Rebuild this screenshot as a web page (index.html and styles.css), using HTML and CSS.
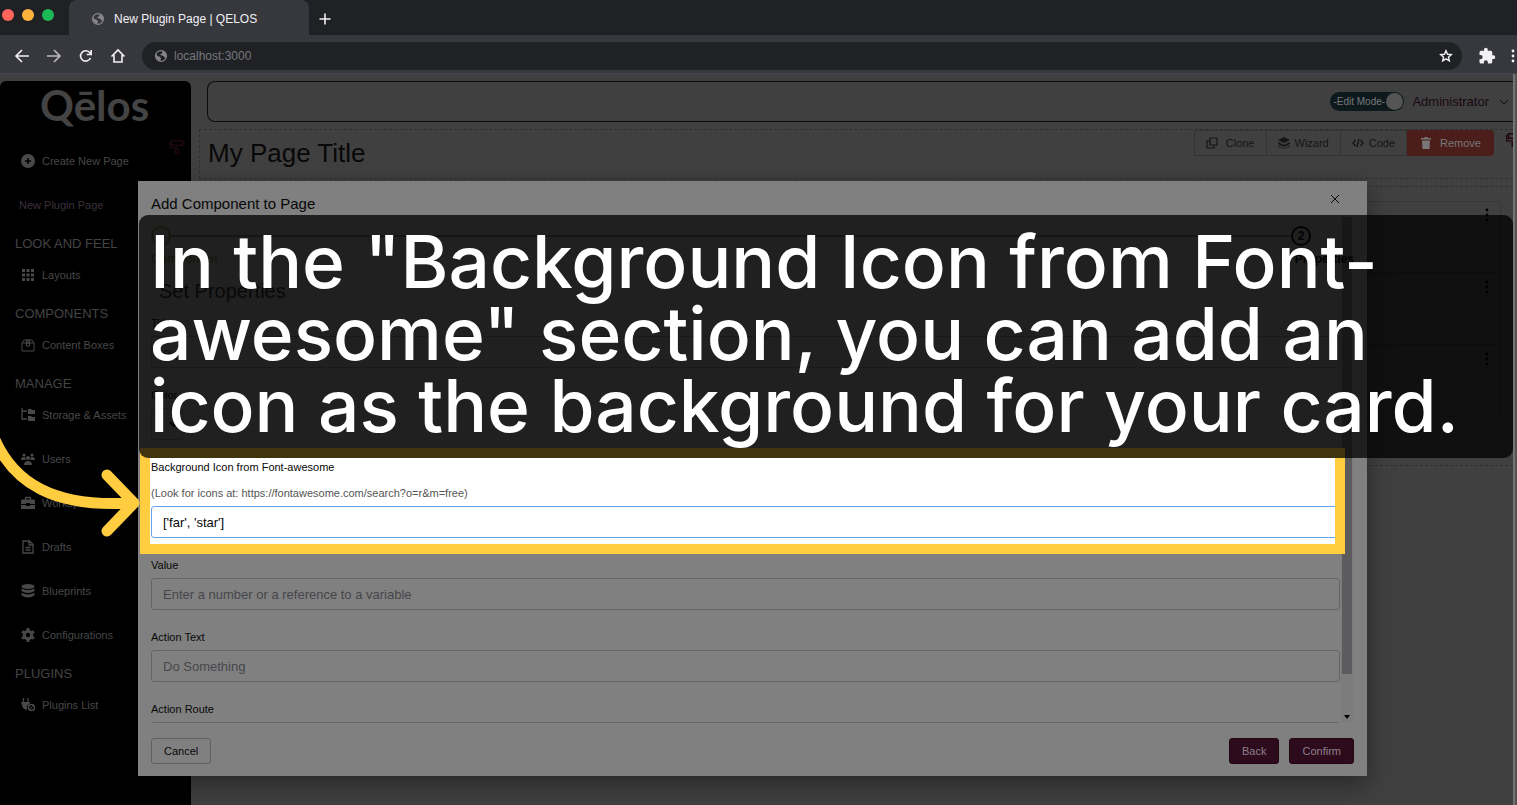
FILE: index.html
```html
<!DOCTYPE html>
<html lang="en">
<head>
<meta charset="utf-8">
<title>New Plugin Page | QELOS</title>
<link rel="stylesheet" href="styles.css">
</head>
<body>
<svg class="sprite" aria-hidden="true">
  <symbol id="globe" viewBox="0 0 16 16"><circle cx="8" cy="8" r="6.2" fill="none" stroke="currentColor" stroke-width="1.4"/><path d="M2 5 4 8l3 1 1 2-1 3-4-3-1-4zM8 2l2 1-1 2-2 1 1 1 3 1 1 2 2-1V5l-3-3z" fill="currentColor"/></symbol>
  <symbol id="dots" viewBox="0 0 4 14"><circle cx="2" cy="2" r="1.4"/><circle cx="2" cy="7" r="1.4"/><circle cx="2" cy="12" r="1.4"/></symbol>
  <symbol id="roller" viewBox="0 0 20 18"><path d="M4 2h12v5H4zM4 4H2v6h8v3M16 4h2v4M8 12h4v4H8z" fill="none" stroke="currentColor" stroke-width="1.6"/></symbol>
</svg>
<header class="browser">
  <div class="tabs">
    <div class="lights"><i class="red"></i><i class="amber"></i><i class="green"></i></div>
    <div class="tab"><svg class="i14"><use href="#globe"/></svg><span>New Plugin Page | QELOS</span></div>
    <button class="plain newtab" aria-label="New tab"><svg viewBox="0 0 14 14" class="i14 line"><path d="M7 1.500v11M1.500 7h11"/></svg></button>
  </div>
  <div class="toolbar">
    <button class="plain" aria-label="Back"><svg class="i16 line" viewBox="0 0 16 16"><path d="M15 8H2M8 2 2 8l6 6"/></svg></button>
    <button class="plain dim" aria-label="Forward"><svg class="i16 line" viewBox="0 0 16 16"><path d="M1 8h13M8 2l6 6-6 6"/></svg></button>
    <button class="plain" aria-label="Reload"><svg class="i16 line" viewBox="0 0 16 16"><path d="M12.500 10A5.200 5.200 0 1 1 11.500 4.300L13 6M13.200 2v4.500H8.700"/></svg></button>
    <button class="plain" aria-label="Home"><svg class="i16 line" viewBox="0 0 16 16"><path d="M1.500 8.500 8 2l6.500 6.500M4 7v7h8V7"/></svg></button>
    <div class="address">
      <svg class="i14"><use href="#globe"/></svg>
      <input aria-label="Address" value="localhost:3000">
      <button class="plain" aria-label="Bookmark"><svg class="i14 line" viewBox="0 0 16 16"><path d="m8 2 1.800 4 4.200.4-3.200 2.900 1 4.200L8 11.300l-3.800 2.200 1-4.200L2 6.400 6.200 6z"/></svg></button>
    </div>
    <button class="plain ext" aria-label="Extensions"><svg class="i18" viewBox="0 0 24 24" fill="currentColor"><path d="M20.500 11H19V7a2 2 0 0 0-2-2h-4V3.500a2.500 2.500 0 0 0-5 0V5H4a2 2 0 0 0-2 2v3.800h1.500a2.700 2.700 0 0 1 0 5.400H2V20a2 2 0 0 0 2 2h3.800v-1.500a2.700 2.700 0 0 1 5.400 0V22H17a2 2 0 0 0 2-2v-4h1.500a2.500 2.500 0 0 0 0-5z"/></svg></button>
    <button class="plain menu" aria-label="Menu"><svg width="4" height="14" fill="currentColor"><use href="#dots"/></svg></button>
  </div>
</header>

<div class="app">
  <nav class="sidebar">
    <div class="logo">Qēlos</div>
    <svg class="side-roller"><use href="#roller"/></svg>
    <a href="#"><svg class="i14" viewBox="0 0 14 14"><circle cx="7" cy="7" r="7" fill="currentColor"/><path d="M7 4v6M4 7h6" stroke="#000" stroke-width="1.500"/></svg>Create New Page</a>
    <a href="#" class="current">New Plugin Page</a>
    <h2>LOOK AND FEEL</h2>
    <a href="#"><svg class="i14" viewBox="0 0 14 14" fill="currentColor"><path d="M1 1h3v3H1zM5.500 1h3v3h-3zM10 1h3v3h-3zM1 5.500h3v3H1zM5.500 5.500h3v3h-3zM10 5.500h3v3h-3zM1 10h3v3H1zM5.500 10h3v3h-3zM10 10h3v3h-3z"/></svg>Layouts</a>
    <h2>COMPONENTS</h2>
    <a href="#"><svg class="i14" viewBox="0 0 14 14" fill="none" stroke="currentColor"><path d="M1 5h12v8H1zM1 5l2-3h8l2 3M5.500 2v6h3V2M7 1v5"/></svg>Content Boxes</a>
    <h2>MANAGE</h2>
    <a href="#"><svg class="i14" viewBox="0 0 14 14"><path d="M1 0v11h5M1 3h5" fill="none" stroke="currentColor" stroke-width="1.300"/><path d="M7 1h3l1 1h3v4H7zM7 8h3l1 1h3v4H7z" fill="currentColor"/></svg>Storage &amp; Assets</a>
    <a href="#"><svg class="i14" viewBox="0 0 14 14" fill="currentColor"><circle cx="3" cy="3" r="1.600"/><circle cx="11" cy="3" r="1.600"/><circle cx="7" cy="6" r="2"/><path d="M0 8q0-3 3-3l1.500.5V8zM14 8q0-3-3-3l-1.500.5V8zM3 13q0-4 4-4t4 4z"/></svg>Users</a>
    <a href="#"><svg class="i14" viewBox="0 0 14 14"><path d="M4.500 4V1.500h5V4" fill="none" stroke="currentColor" stroke-width="1.300"/><path d="M1 3.500h12l1 1V8H9V7H5v1H0V4.500zM0 9h5v1h4V9h5v4H0z" fill="currentColor"/></svg>Workspaces</a>
    <a href="#"><svg class="i14" viewBox="0 0 14 14" fill="none" stroke="currentColor" stroke-width="1.300"><path d="M2 1h6.500L12 4.500V13H2zM8 1v4h4M4.500 7.500h5M4.500 10h5"/></svg>Drafts</a>
    <a href="#"><svg class="i14" viewBox="0 0 14 14" fill="currentColor"><ellipse cx="7" cy="2.500" rx="6.500" ry="2.500"/><path d="M.5 4.500q6.500 3 13 0V7q-6.500 4-13 0zM.5 8.700q6.500 3.500 13 0v2.500q-6.500 4.500-13 0z"/></svg>Blueprints</a>
    <a href="#"><svg class="i14" viewBox="0 0 14 14"><circle cx="7" cy="7" r="3.700" fill="none" stroke="currentColor" stroke-width="3"/><path d="M7 0v3M7 11v3M1 3.500l2.500 1.500M10.500 9l2.500 1.500M1 10.500 3.500 9M10.500 5 13 3.500" stroke="currentColor" stroke-width="3"/></svg>Configurations</a>
    <h2>PLUGINS</h2>
    <a href="#"><svg class="i14" viewBox="0 0 14 14"><path d="M2.500 0v4M7 0v4" stroke="currentColor" stroke-width="1.300"/><path d="M0 4h9v1L6 8v3l-1 1-3-2-1-3z" fill="currentColor"/><circle cx="10.500" cy="9.500" r="3" fill="none" stroke="currentColor" stroke-width="1.400"/><path d="m8.500 12 4-5" stroke="currentColor"/></svg>Plugins List</a>
  </nav>

  <main>
    <div class="topbar">
      <label class="switch"><span>-Edit Mode-</span><input type="checkbox" checked></label>
      <button class="plain user">Administrator<svg width="10" height="6" viewBox="0 0 10 6" fill="none" stroke="currentColor"><path d="m1 1 4 4 4-4"/></svg></button>
    </div>
    <section class="titlebar">
      <h1>My Page Title</h1>
      <div class="actions">
        <button><svg class="i12" viewBox="0 0 12 12" fill="none" stroke="currentColor" stroke-width="1.200"><path d="M4 1h7v7H4zM4 4H1v7h7V8"/></svg>Clone</button>
        <button class="tight"><svg class="i12" viewBox="0 0 12 12" fill="currentColor"><path d="m6 0 6 3-6 3-6-3zM0 5l6 3 6-3v2l-6 3-6-3zM0 8.500l6 3 6-3V9.500L6 12 0 9.500z"/></svg>Wizard</button>
        <button class="tight"><svg class="i12" viewBox="0 0 12 12" fill="none" stroke="currentColor" stroke-width="1.300"><path d="M3.500 3 1 6l2.500 3M8.500 3 11 6 8.500 9M7 2 5 10"/></svg>Code</button>
        <button class="danger"><svg class="i12" viewBox="0 0 12 12" fill="currentColor"><path d="M1 1h3l1-1h2l1 1h3v1.500H1zM2 3.500h8L9.500 12h-7z"/></svg>Remove</button>
        <svg class="roller"><use href="#roller"/></svg>
      </div>
    </section>
    <section class="canvas">
      <div class="row"><svg><use href="#dots"/></svg></div>
      <div class="row"><svg><use href="#dots"/></svg></div>
      <div class="row"><svg><use href="#dots"/></svg></div>
    </section>
  </main>
  <div class="page-scroll"></div>
</div>

<form class="dialog" role="dialog" aria-labelledby="dlg">
  <header><h2 id="dlg">Add Component to Page</h2><button type="button" class="plain" aria-label="Close"><svg width="10" height="10" viewBox="0 0 10 10" stroke="currentColor"><path d="m1 1 8 8M9 1 1 9"/></svg></button></header>
  <div class="content">
    <div class="fields">
      <ol class="steps"><li class="done"><b></b><span>Component</span></li><li class="next"><b>2</b><span>Properties</span></li></ol>
      <h3>Set Properties</h3>
      <div class="field"><label for="title">Title</label><input id="title" placeholder="e.g."></div>
      <div class="field"><label for="color">Color</label><select id="color"><option></option></select></div>
      <div class="field spotlight"><label for="icon">Background Icon from Font-awesome</label><small>(Look for icons at: https://fontawesome.com/search?o=r&amp;m=free)</small><input id="icon" value="['far', 'star']"></div>
      <div class="field"><label for="value">Value</label><input id="value" placeholder="Enter a number or a reference to a variable"></div>
      <div class="field"><label for="text">Action Text</label><input id="text" placeholder="Do Something"></div>
      <div class="field"><label for="route">Action Route</label><input id="route"></div>
    </div>
    <div class="scroll"><i></i><svg width="6" height="4" viewBox="0 0 6 4"><path d="M0 0h6L3 4z"/></svg></div>
  </div>
  <footer><button type="button">Cancel</button><span></span><button type="button" class="primary">Back</button><button type="button" class="primary">Confirm</button></footer>
</form>

<svg class="arrow" viewBox="0 0 140 120" aria-hidden="true"><path d="M-5 20C14 62 52 88 132 83M107 55l27 28-27 28"/></svg>
<p class="caption"><span>In the "Background Icon from Font-</span><span>awesome" section, you can add an</span><span>icon as the background for your card.</span></p>
</body>
</html>
```
FILE: styles.css
```css
* { box-sizing: border-box; }
body {
  margin: 0; height: 100vh; min-height: 640px; position: relative; overflow: hidden;
  display: flex; flex-direction: column;
  background: #404040; color: #080808;
  font-family: "Liberation Sans", Arial, sans-serif; font-size: 12px;
}
h1, h2, h3, p, ol { margin: 0; padding: 0; font-weight: 400; }
button, input, select { font: inherit; color: inherit; }
svg { flex: none; }
.sprite { position: absolute; width: 0; height: 0; }
.plain { display: flex; align-items: center; background: none; border: 0; padding: 0; }
.i12 { width: 12px; height: 12px; }
.i14 { width: 14px; height: 14px; }
.i16 { width: 16px; height: 16px; }
.i18 { width: 18px; height: 18px; }
.line { fill: none; stroke: currentColor; stroke-width: 1.6; }

.browser { background: #37373e; color: #f1f1f4; border-bottom: 1px solid #4c434e; }
.tabs { display: flex; align-items: stretch; height: 35px; background: #202125; }
.lights { display: flex; gap: 8px; width: 69px; padding: 9px 0 0 2px; }
.lights i { width: 12px; height: 12px; border-radius: 50%; }
.red { background: #ff655a; }
.amber { background: #fdb43c; }
.green { background: #1bb855; }
.tab { display: flex; align-items: center; gap: 9px; width: 240px; padding: 3px 22px 0; background: #37373e; border-radius: 8px 8px 0 0; }
.tab svg, .address > svg { color: #85858b; }
.newtab { padding: 3px 9px 0; }
.toolbar { display: flex; align-items: center; gap: 16px; height: 38px; padding: 3px 2px 0 14px; }
.dim { color: #b9b9bf; }
.address { display: flex; flex: 1; align-items: center; gap: 6px; height: 28px; padding: 0 9px 0 12px; border-radius: 14px; background: #202125; }
.address input { flex: 1; min-width: 0; border: 0; padding: 0; background: none; color: #77777c; }
.menu { margin-left: -1px; }

.app { display: flex; flex: 1; min-height: 0; }
.sidebar { position: relative; width: 191px; margin-top: 7px; background: #000; color: #444; border-radius: 6px 6px 0 0; }
.logo { height: 58px; padding-left: 40px; font: 700 42px/48px Lato, sans-serif; }
.side-roller { position: absolute; left: 168px; top: 58px; width: 18px; height: 16px; color: #1c080d; }
.sidebar a { display: flex; align-items: center; gap: 7px; height: 44px; padding-left: 21px; color: #484848; font-size: 11px; text-decoration: none; }
.sidebar a.current { padding-left: 19px; color: #3d303c; }
.sidebar h2 { height: 26px; padding: 7px 0 0 15px; font-size: 13px; line-height: 20px; }

main { flex: 1; min-width: 0; padding: 7px 0 0 8px; }
.topbar { display: flex; align-items: center; justify-content: flex-end; gap: 8px; height: 41px; margin-left: 8px; padding-right: 4px; border: 1px solid #0c0c0c; border-right: 0; border-radius: 8px 0 0 8px; }
.switch { display: flex; align-items: center; justify-content: space-between; width: 74px; height: 19px; padding: 0 1px 0 3px; border-radius: 10px; background: #0d191d; color: #77797b; font-size: 10px; white-space: nowrap; }
.switch input { flex: none; width: 17px; height: 17px; margin: 0; appearance: none; border-radius: 50%; background: #555; }
.user { gap: 10px; font-size: 13px; color: #180812; }
.titlebar { display: flex; align-items: flex-start; justify-content: space-between; height: 50px; margin-top: 7px; padding-left: 8px; border: 1px dashed #303030; border-right: 0; overflow: hidden; }
.titlebar h1 { padding-top: 7px; font-size: 26px; line-height: 32px; }
.actions { display: flex; color: #151515; }
.actions button { display: flex; align-items: center; justify-content: center; gap: 8px; height: 26px; padding: 0 11px; background: none; border: 1px solid #343434; border-left-width: 0; font-size: 11px; }
.actions button:first-child { border-left-width: 1px; }
.actions .tight { gap: 5px; }
.actions .danger { padding: 0 13px; border: 0; border-radius: 0 4px 4px 0; background: #4b1e1c; color: #777; }
.roller { width: 18px; height: 18px; margin: 1px -10px 0 11px; color: #1f070f; }
.canvas { height: 280px; margin-top: 7px; padding: 14px 12px 0; border: 1px dashed #303030; border-width: 1px 0; }
.row { display: flex; justify-content: flex-end; height: 72px; padding: 6px 11px; border: 1px solid #373737; }
.row svg { width: 4px; height: 14px; }

.page-scroll { width: 4px; background: #535353; border-left: 2px solid #747474; }

.dialog { position: absolute; inset: 181px 150px 29px 138px; display: flex; flex-direction: column; background: #808080; color: #080808; box-shadow: 0 8px 24px #0006; }
.dialog header { display: flex; justify-content: space-between; height: 36px; padding: 12px 27px 0 13px; }
.dialog header h2 { font-size: 15px; line-height: 21px; }
.dialog header button { height: 12px; }
.content { display: flex; flex: 1; min-height: 0; overflow: hidden; padding: 0 14px 0 13px; }
.fields { flex: 1; min-width: 0; padding-right: 1px; }
.steps { display: flex; justify-content: space-between; position: relative; height: 56px; padding-top: 9px; list-style: none; font-size: 12px; font-weight: 700; }
.steps::before { content: ""; position: absolute; left: 20px; right: 50px; top: 18px; height: 2px; background: #555; }
.steps li { position: relative; display: flex; flex-direction: column; align-items: center; gap: 6px; }
.steps .done { align-items: flex-start; color: #5c5c40; }
.steps .next { right: -14px; }
.steps .next span { align-self: flex-end; }
.steps .next b { margin-right: 43px; }
.steps b { display: grid; place-items: center; width: 20px; height: 20px; border: 2px solid; border-radius: 50%; background: #808080; }
.fields h3 { height: 37px; padding-left: 8px; font-size: 20px; line-height: 37px; color: #222; }
.field { display: flex; flex-direction: column; margin-bottom: 14px; position: relative; }
.field label, .field small { font-size: 11px; line-height: 26px; }
.field small { color: #555; }
.field input, .field select { width: 100%; height: 32px; padding: 0 11px; border: 1px solid #656565; border-radius: 3px; background: transparent; outline: 0; font-size: 13px; }
.field select { width: 32px; }
.field ::placeholder { color: #46464a; opacity: 1; }
.spotlight { z-index: 1; }
.spotlight::before, .spotlight::after { content: ""; position: absolute; inset: -6px -5px -16px -11px; }
.spotlight::before { background: #fff; z-index: -1; }
.spotlight::after { border: 10px solid #ffcd3f; pointer-events: none; }
.spotlight input { border-color: #66a4e8; }
.scroll { display: flex; flex-direction: column; justify-content: space-between; align-items: center; width: 12px; padding-bottom: 4px; background: #7c7c7c; }
.scroll i { width: 10px; height: 457px; background: #5c5c5f; }
.dialog footer { display: flex; align-items: center; gap: 10px; height: 53px; padding: 3px 13px 0; }
.dialog footer span { flex: 1; }
.dialog footer button { height: 26px; padding: 0 12px; border: 1px solid #606060; border-radius: 3px; background: none; font-size: 11px; }
.dialog footer .primary { border-color: #220713; background: #2d0b1d; color: #8d808a; }

.arrow { position: absolute; left: 0; top: 420px; width: 140px; height: 120px; fill: none; stroke: #ffcd3f; stroke-width: 11; stroke-linecap: round; stroke-linejoin: round; z-index: 2; }
.caption { position: absolute; left: 139px; right: 4px; top: 215px; z-index: 3; padding: 11px 11px 16px; border-radius: 9px; background: #000000bf; color: #fff; font: 500 73px/72px Inter, sans-serif; white-space: nowrap; }
.caption span { display: block; }
```
